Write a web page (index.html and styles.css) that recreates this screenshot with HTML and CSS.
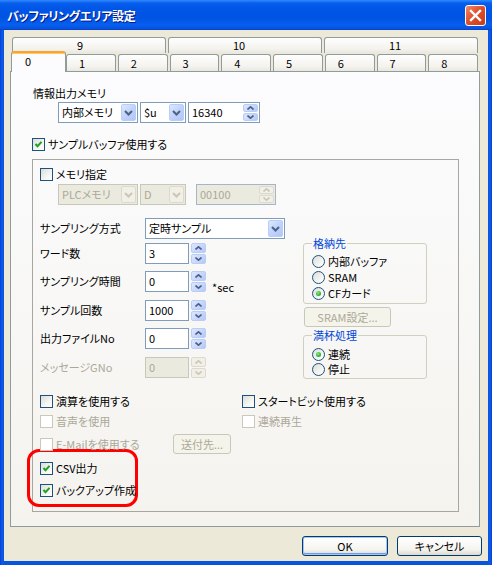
FILE: index.html
```html
<!DOCTYPE html>
<html lang="ja">
<head>
    <meta charset="UTF-8">
    <title>バッファリングエリア設定</title>
    <link rel="stylesheet" href="styles.css">
</head>
<body>
<div class="window">
    <div class="titlebar">
        <span class="title">バッファリングエリア設定</span>
        <span class="close-btn">
            <svg width="13" height="13" viewBox="0 0 13 13"><path d="M2 2 L11 11 M11 2 L2 11" stroke="#fff" stroke-width="2.4" stroke-linecap="square"/></svg>
        </span>
    </div>
    <div class="client">
        <div class="tabs">
            <div class="tab-row row-top">
                <div class="tab">9</div>
                <div class="tab">10</div>
                <div class="tab">11</div>
            </div>
            <div class="tab-row row-bottom">
                <div class="tab selected">0</div>
                <div class="tab">1</div>
                <div class="tab">2</div>
                <div class="tab">3</div>
                <div class="tab">4</div>
                <div class="tab">5</div>
                <div class="tab">6</div>
                <div class="tab">7</div>
                <div class="tab">8</div>
            </div>
        </div>

        <div class="panel">
            <div class="caption">情報出力メモリ</div>
            <div class="field-row memory-row">
                <div class="combo w80"><span class="value">内部メモリ</span><span class="drop"><svg width="9" height="6" viewBox="0 0 9 6"><path d="M1 1 L4.5 4.5 L8 1" stroke="#4d6185" stroke-width="2" fill="none"/></svg></span></div>
                <div class="combo w46"><span class="value">$u</span><span class="drop"><svg width="9" height="6" viewBox="0 0 9 6"><path d="M1 1 L4.5 4.5 L8 1" stroke="#4d6185" stroke-width="2" fill="none"/></svg></span></div>
                <div class="spin-box w72"><span class="value">16340</span>
                    <span class="inner-spin">
                        <span class="sbtn"><svg width="7" height="4" viewBox="0 0 7 4"><path d="M0.5 3.5 L3.5 0.8 L6.5 3.5" stroke="#4d6185" stroke-width="1.6" fill="none"/></svg></span>
                        <span class="sbtn"><svg width="7" height="4" viewBox="0 0 7 4"><path d="M0.5 0.5 L3.5 3.2 L6.5 0.5" stroke="#4d6185" stroke-width="1.6" fill="none"/></svg></span>
                    </span>
                </div>
            </div>
            <div class="check sample-check"><span class="cb on"><svg width="11" height="11" viewBox="0 0 11 11"><path d="M2.5 5 L4.5 7.2 L8.5 2.8" stroke="#21a121" stroke-width="2" fill="none"/></svg></span>サンプルバッファ使用する</div>

            <div class="group">
                <div class="check"><span class="cb"></span>メモリ指定</div>
                <div class="field-row disabled-row">
                    <div class="combo w80 off"><span class="value">PLCメモリ</span><span class="drop"><svg width="9" height="6" viewBox="0 0 9 6"><path d="M1 1 L4.5 4.5 L8 1" stroke="#c9c7ba" stroke-width="2" fill="none"/></svg></span></div>
                    <div class="combo w46 off"><span class="value">D</span><span class="drop"><svg width="9" height="6" viewBox="0 0 9 6"><path d="M1 1 L4.5 4.5 L8 1" stroke="#c9c7ba" stroke-width="2" fill="none"/></svg></span></div>
                    <div class="spin-box w80 off gap-left"><span class="value">00100</span>
                        <span class="inner-spin">
                            <span class="sbtn"><svg width="7" height="4" viewBox="0 0 7 4"><path d="M0.5 3.5 L3.5 0.8 L6.5 3.5" stroke="#c9c7ba" stroke-width="1.6" fill="none"/></svg></span>
                            <span class="sbtn"><svg width="7" height="4" viewBox="0 0 7 4"><path d="M0.5 0.5 L3.5 3.2 L6.5 0.5" stroke="#c9c7ba" stroke-width="1.6" fill="none"/></svg></span>
                        </span>
                    </div>
                </div>

                <div class="columns">
                    <div class="left-col">
                        <div class="form-row">
                            <span class="label">サンプリング方式</span>
                            <div class="combo w140"><span class="value">定時サンプル</span><span class="drop"><svg width="9" height="6" viewBox="0 0 9 6"><path d="M1 1 L4.5 4.5 L8 1" stroke="#4d6185" stroke-width="2" fill="none"/></svg></span></div>
                        </div>
                        <div class="form-row r2">
                            <span class="label">ワード数</span>
                            <div class="edit">3</div>
                            <div class="spinner">
                                <span class="sbtn"><svg width="7" height="4" viewBox="0 0 7 4"><path d="M0.5 3.5 L3.5 0.8 L6.5 3.5" stroke="#4d6185" stroke-width="1.6" fill="none"/></svg></span>
                                <span class="sbtn"><svg width="7" height="4" viewBox="0 0 7 4"><path d="M0.5 0.5 L3.5 3.2 L6.5 0.5" stroke="#4d6185" stroke-width="1.6" fill="none"/></svg></span>
                            </div>
                        </div>
                        <div class="form-row r3">
                            <span class="label">サンプリング時間</span>
                            <div class="edit">0</div>
                            <div class="spinner">
                                <span class="sbtn"><svg width="7" height="4" viewBox="0 0 7 4"><path d="M0.5 3.5 L3.5 0.8 L6.5 3.5" stroke="#4d6185" stroke-width="1.6" fill="none"/></svg></span>
                                <span class="sbtn"><svg width="7" height="4" viewBox="0 0 7 4"><path d="M0.5 0.5 L3.5 3.2 L6.5 0.5" stroke="#4d6185" stroke-width="1.6" fill="none"/></svg></span>
                            </div>
                            <span class="unit">*sec</span>
                        </div>
                        <div class="form-row r4">
                            <span class="label">サンプル回数</span>
                            <div class="edit">1000</div>
                            <div class="spinner">
                                <span class="sbtn"><svg width="7" height="4" viewBox="0 0 7 4"><path d="M0.5 3.5 L3.5 0.8 L6.5 3.5" stroke="#4d6185" stroke-width="1.6" fill="none"/></svg></span>
                                <span class="sbtn"><svg width="7" height="4" viewBox="0 0 7 4"><path d="M0.5 0.5 L3.5 3.2 L6.5 0.5" stroke="#4d6185" stroke-width="1.6" fill="none"/></svg></span>
                            </div>
                        </div>
                        <div class="form-row r3">
                            <span class="label">出力ファイルNo</span>
                            <div class="edit">0</div>
                            <div class="spinner">
                                <span class="sbtn"><svg width="7" height="4" viewBox="0 0 7 4"><path d="M0.5 3.5 L3.5 0.8 L6.5 3.5" stroke="#4d6185" stroke-width="1.6" fill="none"/></svg></span>
                                <span class="sbtn"><svg width="7" height="4" viewBox="0 0 7 4"><path d="M0.5 0.5 L3.5 3.2 L6.5 0.5" stroke="#4d6185" stroke-width="1.6" fill="none"/></svg></span>
                            </div>
                        </div>
                        <div class="form-row r4 off">
                            <span class="label">メッセージGNo</span>
                            <div class="edit">0</div>
                            <div class="spinner">
                                <span class="sbtn"><svg width="7" height="4" viewBox="0 0 7 4"><path d="M0.5 3.5 L3.5 0.8 L6.5 3.5" stroke="#c9c7ba" stroke-width="1.6" fill="none"/></svg></span>
                                <span class="sbtn"><svg width="7" height="4" viewBox="0 0 7 4"><path d="M0.5 0.5 L3.5 3.2 L6.5 0.5" stroke="#c9c7ba" stroke-width="1.6" fill="none"/></svg></span>
                            </div>
                        </div>
                    </div>

                    <div class="right-col">
                        <fieldset class="radio-group store">
                            <legend>格納先</legend>
                            <div class="radio"><span class="rb"></span>内部バッファ</div>
                            <div class="radio"><span class="rb"></span>SRAM</div>
                            <div class="radio"><span class="rb on"></span>CFカード</div>
                        </fieldset>
                        <button class="btn small off sram-btn">SRAM設定...</button>
                        <fieldset class="radio-group full">
                            <legend>満杯処理</legend>
                            <div class="radio"><span class="rb on"></span>連続</div>
                            <div class="radio"><span class="rb"></span>停止</div>
                        </fieldset>
                    </div>
                </div>

                <div class="options">
                    <div class="check"><span class="cb"></span>演算を使用する</div>
                    <div class="check"><span class="cb"></span>スタートビット使用する</div>
                    <div class="check off row-gap"><span class="cb"></span>音声を使用</div>
                    <div class="check off row-gap"><span class="cb"></span>連続再生</div>
                </div>
                <div class="mail-row">
                    <div class="check off mail-check"><span class="cb"></span>E-Mailを使用する</div>
                    <button class="btn small off send-btn">送付先...</button>
                </div>
                <div class="highlight">
                    <div class="check"><span class="cb on"><svg width="11" height="11" viewBox="0 0 11 11"><path d="M2.5 5 L4.5 7.2 L8.5 2.8" stroke="#21a121" stroke-width="2" fill="none"/></svg></span>CSV出力</div>
                    <div class="check backup"><span class="cb on"><svg width="11" height="11" viewBox="0 0 11 11"><path d="M2.5 5 L4.5 7.2 L8.5 2.8" stroke="#21a121" stroke-width="2" fill="none"/></svg></span>バックアップ作成</div>
                </div>
            </div>
        </div>

        <div class="footer">
            <button class="btn default ok">OK</button>
            <button class="btn cancel">キャンセル</button>
        </div>
    </div>
</div>
</body>
</html>
```

FILE: styles.css
```css
html, body {
    margin: 0;
    padding: 0;
    background: #fff;
}
body {
    font-family: "Noto Sans CJK JP", "Noto Sans", sans-serif;
    font-size: 11px;
    line-height: 13px;
    color: #000;
    font-feature-settings: "palt";
}
.window {
    width: 492px;
    height: 565px;
    background: linear-gradient(90deg, #0a3fd4 0px, #0c5bea 2px, #0855dd 4px, #0855dd 488px, #0c5bea 490px, #0a3fd4 492px);
    display: flex;
    flex-direction: column;
}
.titlebar {
    height: 30px;
    flex: none;
    display: flex;
    align-items: center;
    justify-content: space-between;
    padding: 0 6px 0 7px;
    background: linear-gradient(#2d8cff 0px, #0a5eee 3px, #0056e7 8px, #0053e3 18px, #0560f0 25px, #0a4fd8 29px, #003bc0 30px);
    box-sizing: border-box;
}
.title {
    color: #fff;
    font-weight: bold;
    font-size: 12px;
    text-shadow: 1px 1px 0 #0a1883;
    letter-spacing: -0.3px;
}
.close-btn {
    width: 21px;
    height: 21px;
    box-sizing: border-box;
    border: 1px solid #fff;
    border-radius: 3px;
    background: linear-gradient(135deg, #f08a6a 0%, #e0502c 45%, #c73b1a 100%);
    display: flex;
    align-items: center;
    justify-content: center;
    margin-top: 1px;
}
.client {
    flex: 1;
    margin: 0 4px 4px 4px;
    background: #ece9d8;
    padding-top: 7px;
    box-sizing: border-box;
}

/* tabs */
.tabs {
    margin-left: 6px;
    width: 470px;
}
.tab-row {
    display: flex;
    gap: 2px;
}
.row-top {
    height: 16px;
    padding: 0 2px;
}
.row-bottom {
    height: 18px;
    padding: 0 2px 0 1px;
    align-items: flex-end;
}
.tab {
    flex: 1;
    box-sizing: border-box;
    border: 1px solid #919b9c;
    border-bottom: none;
    border-radius: 3px 3px 0 0;
    background: linear-gradient(#fefefe, #f4f3ee 70%, #e8e7e0);
    font-size: 11px;
    line-height: 14px;
}
.row-top .tab {
    height: 16px;
    padding-left: 64px;
}
.row-bottom .tab {
    height: 17px;
    line-height: 17px;
    padding-left: 12px;
}
.row-bottom .tab.selected {
    flex: none;
    width: 55px;
    height: 21px;
    margin-bottom: -1px;
    margin-right: -2px;
    padding-left: 13px;
    position: relative;
    z-index: 2;
    background: #fcfcfe;
    border-top: 2px solid #f7a435;
    box-shadow: inset 0 1px 0 #ffc860;
    line-height: 17px;
}

/* panel */
.panel {
    margin-left: 6px;
    width: 470px;
    height: 456px;
    box-sizing: border-box;
    border: 1px solid #919b9c;
    background: linear-gradient(#fcfcfe, #f4f3ee);
    padding: 14px 0 0 22px;
    position: relative;
    z-index: 1;
}
.caption {
    line-height: 14px;
}
.field-row {
    display: flex;
    gap: 2px;
}
.memory-row {
    margin-top: 2px;
    margin-left: 25px;
}
.disabled-row {
    margin-top: 3px;
    margin-left: 18px;
}
.gap-left {
    margin-left: 8px;
}

.combo, .spin-box, .edit {
    height: 21px;
    box-sizing: border-box;
    border: 1px solid #7f9db9;
    background: #fff;
    display: flex;
    align-items: center;
    padding: 1px;
}
.combo .value, .spin-box .value {
    flex: 1;
    padding-left: 2px;
    white-space: nowrap;
    line-height: 15px;
}
.w46 { width: 46px; }
.w72 { width: 72px; }
.w80 { width: 80px; }
.w140 { width: 140px; }
.drop {
    width: 15px;
    height: 17px;
    flex: none;
    box-sizing: border-box;
    border: 1px solid #b9cdf6;
    border-radius: 2px;
    background: linear-gradient(135deg, #dde8fe 0%, #c1d3fb 50%, #b0c6f6 100%);
    display: flex;
    align-items: center;
    justify-content: center;
}
.inner-spin, .spinner {
    display: flex;
    flex-direction: column;
    gap: 1px;
    flex: none;
}
.inner-spin .sbtn {
    width: 15px;
    height: 8px;
}
.sbtn {
    box-sizing: border-box;
    border: 1px solid #b9cdf6;
    border-radius: 2px;
    background: linear-gradient(135deg, #dde8fe 0%, #c6d5fb 60%, #b4c9f6 100%);
    display: flex;
    align-items: center;
    justify-content: center;
}
.spinner {
    margin-left: 2px;
}
.spinner .sbtn {
    width: 15px;
    height: 10px;
}
.combo.off, .spin-box.off, .off .edit {
    border-color: #c9c7ba;
    background: #ebeade;
    color: #aca899;
}
.spin-box.off {
    border-color: #a7b5c8;
}
.off .drop, .off .sbtn {
    border-color: #dcdad0;
    background: #f1efe6;
}

/* checkboxes */
.check {
    display: flex;
    align-items: center;
    gap: 3px;
    height: 13px;
    white-space: nowrap;
}
.cb {
    width: 13px;
    height: 13px;
    box-sizing: border-box;
    border: 1px solid #1c5180;
    background: linear-gradient(135deg, #dcdcd7 0%, #f5f5f2 60%, #ffffff 100%);
    display: flex;
    flex: none;
}
.check.off {
    color: #aca899;
}
.check.off .cb {
    border-color: #cac8bb;
    background: #fff;
}
.sample-check {
    margin-top: 15px;
    margin-left: -1px;
}

/* sample buffer group */
.group {
    margin-top: 8px;
    margin-left: -1px;
    width: 427px;
    height: 353px;
    box-sizing: border-box;
    border: 1px solid #a7a6a0;
    padding: 8px 0 0 7px;
}
.columns {
    display: flex;
    align-items: flex-start;
    margin-top: 13px;
}
.left-col {
    width: 263px;
}
.form-row {
    display: flex;
    align-items: center;
    height: 21px;
}
.form-row.r2 { margin-top: 4px; }
.form-row.r3 { margin-top: 7px; }
.form-row.r4 { margin-top: 8px; }
.form-row.off .label {
    color: #aca899;
}
.label {
    width: 105px;
    flex: none;
    white-space: nowrap;
}
.edit {
    width: 44px;
    padding-left: 3px;
    line-height: 15px;
}
.unit {
    align-self: flex-end;
    margin-left: 6px;
    margin-bottom: -2px;
}
.right-col {
    width: 124px;
    margin-top: 18px;
}
.radio-group {
    margin: 0;
    border: 1px solid #d0d0bf;
    border-radius: 3px;
    padding: 5px 0 0 8px;
    min-width: 0;
    box-sizing: border-box;
    width: 124px;
}
.radio-group legend {
    color: #0046d5;
    padding: 0 1px;
    margin-left: 0;
    line-height: 14px;
}
.radio-group.full {
    margin-top: 1px;
    padding-top: 6px;
}
.radio {
    display: flex;
    align-items: flex-start;
    gap: 3px;
    height: 16px;
    line-height: 13px;
}
.full .radio {
    height: 15px;
}
.rb {
    width: 13px;
    height: 13px;
    box-sizing: border-box;
    border: 1px solid #1c5180;
    border-radius: 50%;
    background: linear-gradient(135deg, #dcdcd7 0%, #f7f7f4 70%, #ffffff 100%);
    display: flex;
    align-items: center;
    justify-content: center;
    flex: none;
}
.rb.on::after {
    content: "";
    width: 5px;
    height: 5px;
    border-radius: 50%;
    background: radial-gradient(circle at 40% 35%, #8ee88a 0%, #2fb52f 60%, #1e931e 100%);
}

/* buttons */
.btn {
    font-family: inherit;
    font-size: 11px;
    font-feature-settings: "palt";
    color: #000;
    height: 20px;
    box-sizing: border-box;
    border: 1px solid #003c74;
    border-radius: 3px;
    background: linear-gradient(#ffffff 0%, #f5f4ef 70%, #dcd8cc 100%);
    padding: 0;
    line-height: 16px;
}
.btn.default {
    box-shadow: inset 0 0 0 1px #a8c4f1, inset 0 -1px 0 1px #6f9ce8;
}
.btn.off {
    border-color: #c9c7ba;
    background: #f5f4ea;
    color: #aca899;
}
.sram-btn {
    width: 87px;
    margin-top: 3px;
    margin-left: 1px;
}
.options {
    display: grid;
    grid-template-columns: 202px auto;
    margin-top: 16px;
}
.options .row-gap {
    margin-top: 7px;
}
.mail-row {
    display: flex;
    align-items: center;
    height: 20px;
    margin-top: 6px;
}
.mail-check {
    width: 133px;
}
.send-btn {
    width: 58px;
}
.highlight {
    margin-top: -5px;
    margin-left: -13px;
    width: 111px;
    box-sizing: border-box;
    border: 3px solid #ff0000;
    border-radius: 12px;
    padding: 10px 0 7px 10px;
}
.highlight .backup {
    margin-top: 9px;
}

.footer {
    display: flex;
    justify-content: flex-end;
    gap: 9px;
    margin-top: 9px;
    padding-right: 6px;
}
.ok {
    width: 86px;
}
.cancel {
    width: 85px;
}
```
